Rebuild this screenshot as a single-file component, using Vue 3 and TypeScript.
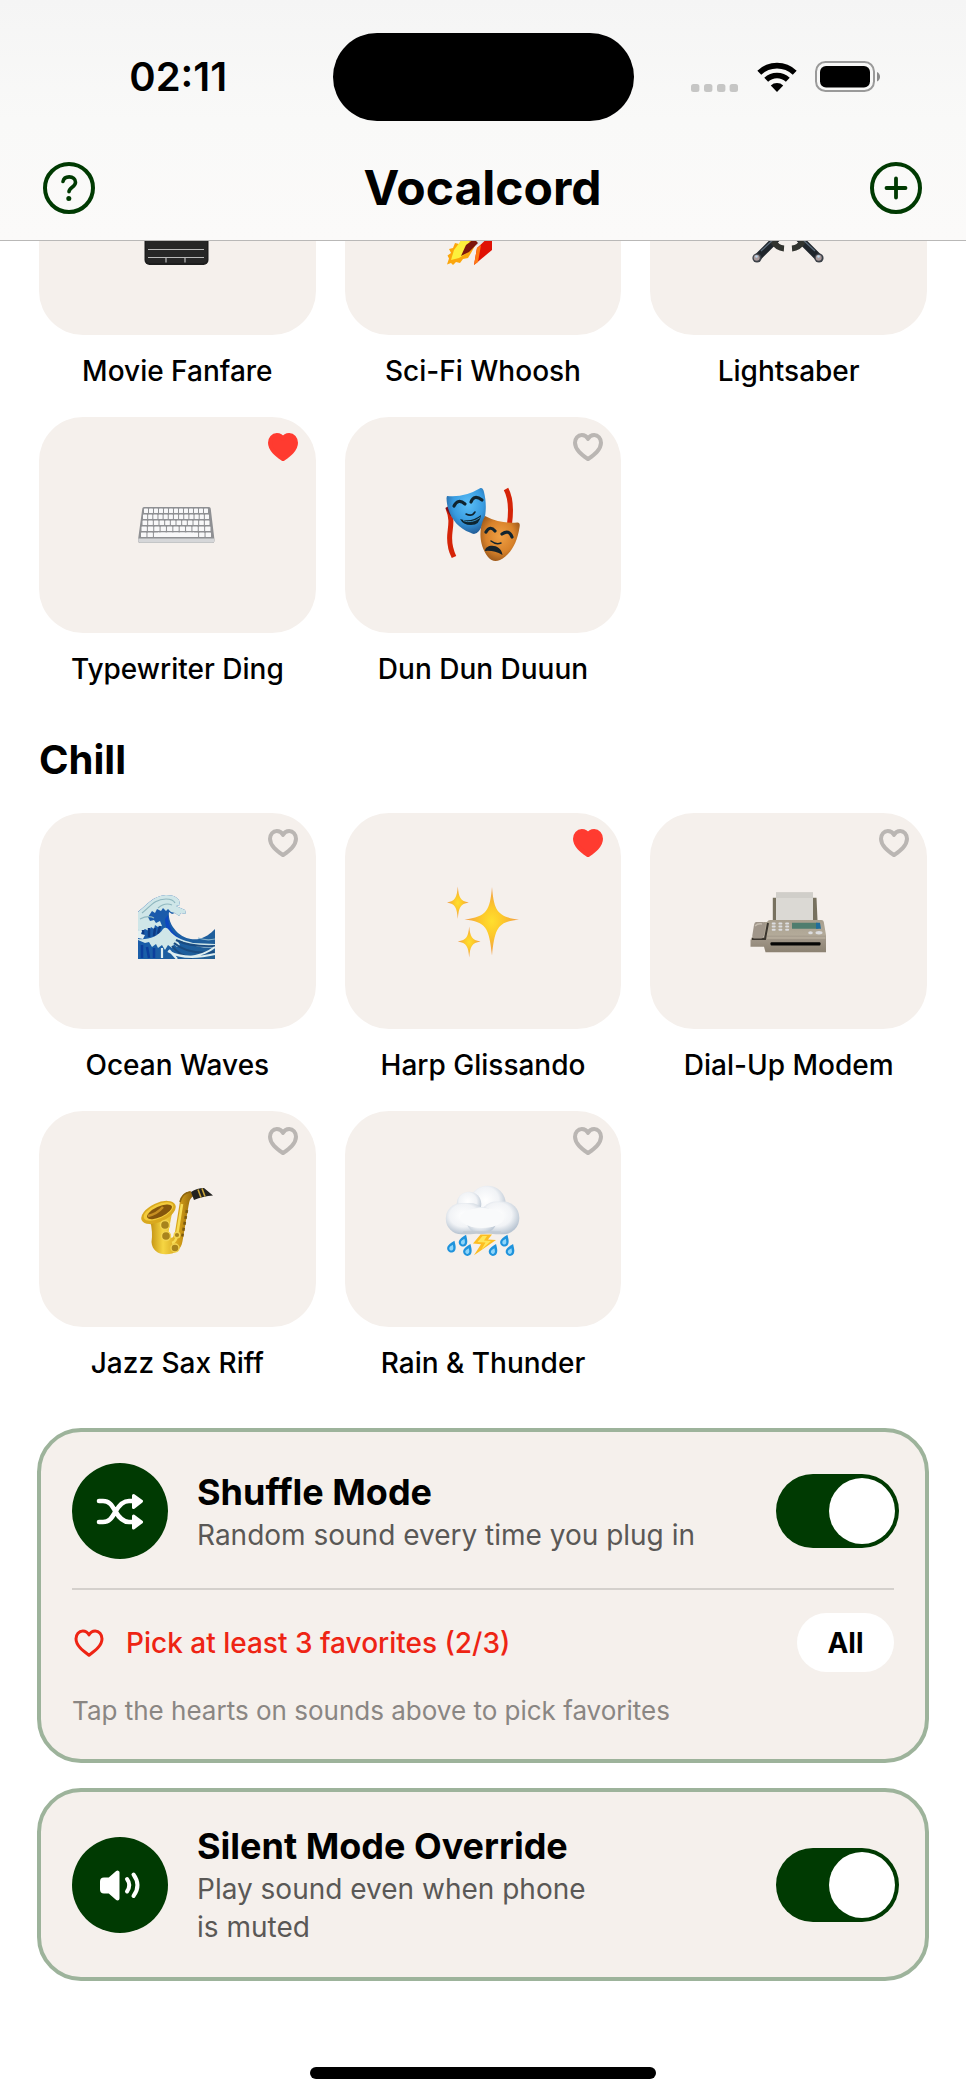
<script setup lang="ts">
import { ref } from 'vue'

interface Sound {
  id: string
  name: string
  favorite: boolean
}

interface Section {
  title: string
  sounds: Sound[]
}

const sections = ref<Section[]>([
  {
    title: '',
    sounds: [
      { id: 'clapper', name: 'Movie Fanfare', favorite: false },
      { id: 'rocket', name: 'Sci-Fi Whoosh', favorite: false },
      { id: 'swords', name: 'Lightsaber', favorite: false },
      { id: 'keyboard', name: 'Typewriter Ding', favorite: true },
      { id: 'masks', name: 'Dun Dun Duuun', favorite: false },
    ],
  },
  {
    title: 'Chill',
    sounds: [
      { id: 'wave', name: 'Ocean Waves', favorite: false },
      { id: 'sparkles', name: 'Harp Glissando', favorite: true },
      { id: 'fax', name: 'Dial-Up Modem', favorite: false },
      { id: 'sax', name: 'Jazz Sax Riff', favorite: false },
      { id: 'storm', name: 'Rain & Thunder', favorite: false },
    ],
  },
])

const shuffle = ref(true)
const silentOverride = ref(true)

const heartPath =
  'M15 26.2C9 21.8 2 16.8 2 9.8 2 5.4 5 2 8.8 2c2.7 0 4.9 1.4 6.2 3.9C16.3 3.4 18.5 2 21.2 2 25 2 28 5.4 28 9.8c0 7-7 12-13 16.4z'

// One entry per row of keys: y, left edge, right edge, number of keys.
const keyRows = [
  { y: 22.5, x1: 6, x2: 71, n: 13 },
  { y: 28.5, x1: 5, x2: 72, n: 13 },
  { y: 34.5, x1: 4.5, x2: 72.5, n: 12 },
  { y: 40.5, x1: 3.5, x2: 73.5, n: 11 },
  { y: 46.5, x1: 3, x2: 74, n: 11 },
]
const keys = keyRows.flatMap((r) => {
  const w = (r.x2 - r.x1) / r.n
  return Array.from({ length: r.n }, (_, i) => ({ x: r.x1 + i * w, y: r.y, w: w - 1 }))
})

const drops = [
  [8, 66.7],
  [19.6, 60.7],
  [24, 70],
  [49.6, 70],
  [61, 60.7],
  [66.6, 70],
]
</script>

<template>
  <div class="screen">
    <header class="top">
      <div class="status">
        <time class="clock">02:11</time>
        <div class="island"></div>
        <div class="indicators">
          <svg width="48" height="30" viewBox="0 0 48 30" fill="#c6c6c5" aria-hidden="true">
            <rect x="0" y="22" width="8.4" height="8" rx="2.5" />
            <rect x="13" y="22" width="8.4" height="8" rx="2.5" />
            <rect x="26" y="22" width="8.4" height="8" rx="2.5" />
            <rect x="38.6" y="22" width="8.4" height="8" rx="2.5" />
          </svg>
          <svg width="40" height="30" viewBox="0 0 40 30" aria-hidden="true">
            <path d="M2.3 10.8A25.5 25.5 0 0 1 37.7 10.8" fill="none" stroke="#000" stroke-width="5.6" />
            <path d="M9.2 17.8A15.8 15.8 0 0 1 30.8 17.8" fill="none" stroke="#000" stroke-width="5.6" />
            <path d="M20 30L13.8 23.6a9 9 0 0 1 12.4 0z" />
          </svg>
          <svg width="66" height="32" viewBox="0 0 66 32" aria-hidden="true">
            <rect x="1" y="1" width="58" height="29" rx="9.5" fill="none" stroke="#9a9a9a" stroke-width="2" />
            <rect x="5" y="5" width="50" height="21.5" rx="6" />
            <path d="M62 11c4 1.500 4 8 0 9.500z" fill="#8a8a8a" />
          </svg>
        </div>
      </div>
      <div class="nav">
        <button type="button" class="round" aria-label="Help">
          <svg width="52" height="52" viewBox="0 0 52 52" fill="none" stroke="#003a02" stroke-linecap="round">
            <circle cx="26" cy="26" r="24" stroke-width="4" />
            <path d="M20 19.5c.6-3.200 3-4.600 6.200-4.600 3.700 0 6.300 2 6.300 5.300 0 5-6.500 4.900-6.500 9.500" stroke-width="3.600" />
            <circle cx="25.800" cy="36.600" r="2.500" fill="#003a02" stroke="none" />
          </svg>
        </button>
        <h1>Vocalcord</h1>
        <button type="button" class="round" aria-label="Add sound">
          <svg width="52" height="52" viewBox="0 0 52 52" fill="none" stroke="#003a02" stroke-linecap="round">
            <circle cx="26" cy="26" r="24" stroke-width="4" />
            <path d="M26 16.500v19M16.500 26h19" stroke-width="3.800" />
          </svg>
        </button>
      </div>
    </header>

    <main>
      <section v-for="section in sections" :key="section.title" class="group">
        <h2 v-if="section.title">{{ section.title }}</h2>
        <div class="grid">
          <div v-for="sound in section.sounds" :key="sound.id" class="sound">
            <div class="tile">
              <button type="button" class="card" :aria-labelledby="`name-${sound.id}`">
                <svg width="78" height="78" viewBox="0 0 78 78" aria-hidden="true">
                  <template v-if="sound.id === 'clapper'">
                    <path d="M6 8L70 0v12L6 20z" fill="#222" />
                    <rect x="6.500" y="20" width="64" height="57" rx="5" fill="#1d1d1d" />
                    <rect x="8" y="20" width="61" height="55" rx="4" fill="#262626" />
                    <path d="M10 61.500h56M10 69.500h56M28 69.500v5M47 69.500v5" stroke="#b9b9b9" stroke-width="1.200" />
                  </template>

                  <template v-else-if="sound.id === 'rocket'">
                    <path d="M20 46C32 20 52 6 74 3 72 25 58 46 32 58z" fill="#dfe3e8" />
                    <path d="M33 60L48 46v16L30 77z" fill="#e01004" />
                    <path d="M33 60l4-3-3 17-4 3z" fill="#ff7a12" />
                    <path
                      d="M3 76.500l2-6-1.500-3L7 65l-2-4 4-1 2-5 4 1 6-10 12 8-6 11-3 5-5 1-3 4-4-1-3 3-2-2z"
                      fill="#fba60c"
                    />
                    <path d="M7 72l3-10 9-12 9 5-5 10-8 5z" fill="#fdf03c" />
                    <path d="M17 68l5-11 8-6 4 4-9 9z" fill="#7d150c" />
                  </template>

                  <template v-else-if="sound.id === 'swords'">
                    <path d="M72 2L30 50M4 2l43 48" stroke="#c4cbd1" stroke-width="5" />
                    <g stroke="#20262c" fill="none">
                      <path d="M8 69L29 48M68 69L47 48" stroke-width="7.500" />
                      <path d="M22 52q5 8 12 8.500M54 52q-5 8-12 8.500" stroke="#32342f" stroke-width="6" />
                    </g>
                    <path d="M11 63L26 49M65 63L50 49" stroke="#5c6b7a" stroke-width="1.300" />
                    <circle cx="7" cy="70" r="4.600" fill="#3c4148" />
                    <circle cx="69" cy="70" r="4.600" fill="#3c4148" />
                    <circle cx="6.700" cy="69.700" r="3" fill="#a99a9b" />
                    <circle cx="68.700" cy="69.700" r="3" fill="#a99a9b" />
                    <circle cx="6.500" cy="68.500" r="1.300" fill="#b9d4ea" />
                    <circle cx="68.500" cy="68.500" r="1.300" fill="#b9d4ea" />
                  </template>

                  <template v-else-if="sound.id === 'keyboard'">
                    <path d="M6 21h65q1.500 0 1.700 1.500L76.500 54q0 3-2 3H2q-2 0-2-3L4.300 22.500Q4.500 21 6 21z" fill="#8f9093" />
                    <path d="M.3 52.500h76l.2 2.500q-.3 1.700-2 1.700H2Q.3 56.700.2 55z" fill="#d6d7d9" />
                    <rect
                      v-for="(k, i) in keys"
                      :key="i"
                      :x="k.x"
                      :y="k.y"
                      :width="k.w"
                      height="4.500"
                      rx=".6"
                      fill="#f8f8f9"
                    />
                    <rect x="20" y="46.500" width="36" height="4.500" fill="#f8f8f9" />
                  </template>

                  <template v-else-if="sound.id === 'masks'">
                    <defs>
                      <radialGradient id="maskBlue" cx=".55" cy=".35" r=".65">
                        <stop offset="0" stop-color="#5cc0f8" />
                        <stop offset=".6" stop-color="#389be0" />
                        <stop offset="1" stop-color="#235f9a" />
                      </radialGradient>
                      <radialGradient id="maskGold" cx=".5" cy=".45" r=".6">
                        <stop offset="0" stop-color="#f0a044" />
                        <stop offset=".6" stop-color="#d8822a" />
                        <stop offset="1" stop-color="#96551a" />
                      </radialGradient>
                    </defs>
                    <path d="M4 22c4 10 3 16 2 24s0 17 4 25" fill="none" stroke="#d52408" stroke-width="5" />
                    <path d="M3 21l5 8" stroke="#7c0c1a" stroke-width="4" />
                    <path d="M62 3c5 9 5.500 20 3.500 35" fill="none" stroke="#d52408" stroke-width="5" />
                    <path d="M3 10q17 2 33.500-8Q39 1.500 40 6c3.500 14 2 30-5 39q-4 5-9 1.500C13 42 3 29 2.500 12z" fill="url(#maskBlue)" />
                    <path d="M41 30q15 8 32.500 6.500 3 0 2 5C73 58 66 69 56 74q-7 3-12-3c-9-12-10-28-3-41z" fill="url(#maskGold)" />
                    <g fill="none" stroke="#10242f" stroke-linecap="round">
                      <path d="M10 20q4-8 11-2M27 16q3-8 11-2" stroke-width="3.200" />
                      <path d="M22 28q6 3 9-2" stroke-width="1.500" />
                      <path d="M42 46q4-7 9-1M58 48q7-5 10 3" stroke-width="3.200" />
                      <path d="M47 55q5 4 10 2" stroke-width="1.500" />
                    </g>
                    <path d="M16 33q11 4 21-4-1 10-10 10-8 0-11-6z" fill="#0d2530" />
                    <path d="M19 34.500q9 3.500 17-3" fill="none" stroke="#3a8ab8" stroke-width="1" />
                    <path d="M41 65c0-7 16-8 17.500 4q-9-5-17.500-4z" fill="#15222a" />
                  </template>

                  <template v-else-if="sound.id === 'wave'">
                    <defs>
                      <linearGradient id="sea" x1="0" y1="0" x2="1" y2="1">
                        <stop offset="0" stop-color="#1a55b0" />
                        <stop offset=".5" stop-color="#1a5ea8" />
                        <stop offset="1" stop-color="#235f92" />
                      </linearGradient>
                    </defs>
                    <path
                      d="M-.5 30C8 24 14 14 28 13c9 0 11 3 13 5l1 5-4 1 9 4 1 4-5-1-2 3-4-3-3 1-3-2c-1 8 3 15 9 21 7 6 15 7 21 6 7-2 11-5 16-10v30H-.5z"
                      fill="url(#sea)"
                    />
                    <path
                      d="M0 30C8 24 14 14 28 13c9 0 11 3 13 5l1 5-4 1 9 4 1 4-5-1-2 3-4-3-4-1-3-3-2 2-3-3-2 3-4-2-2 4-3-2-4 6 2 4 4-1 2 3 4-2 2 5-4 1-3-2-1 4-3-2-2 4-4-2-4 3-4-3z"
                      fill="#cfe6e8"
                    />
                    <path d="M4 31C12 25 16 17 28 17c5 0 8 2 9 4M20 26q7-6 14-3M2 37q8-4 14-1" fill="none" stroke="#8fb7bf" stroke-width="1.200" />
                    <path d="M30 33c0 11 4 19 15 25l-9-2c-6-4-9-12-9-19z" fill="#0d48c0" />
                    <path d="M5 48v7M11 46v9M17 46l-1 8M22 44l-2 8" stroke="#0d3c86" stroke-width="2.500" />
                    <path d="M0 48l4 1-1 3 4 1-2 4-5-1z" fill="#e2f0f1" />
                    <path
                      d="M0 57c10 1 20-2 25-10q3-3 6 1c5 7 13 10 24 13l22 1v3c-14 2-24-2-34-6l-4-1 3 5-3 2-3-3-2 4-4-3-3 5-3-5-4 3-2-4-4 3-3-5-4 1-7-3z"
                      fill="#cfe6e8"
                    />
                    <path d="M38 58q14 7 39 6M36 61q14 12 40 9M34 64q8 10 20 12" fill="none" stroke="#1a4b80" stroke-width="2" />
                    <path d="M30 69q16 10 47 3M77 65q-10 8-26 10M24 66v10M31 68l8 9" fill="none" stroke="#dfeef0" stroke-width="2.200" />
                    <path d="M60 56q9 3 17 1" fill="none" stroke="#86b3cc" stroke-width="1.200" />
                    <path d="M4 63v13M9 65l2 11M16 66v10" stroke="#0c3f9c" stroke-width="2.500" />
                  </template>

                  <template v-else-if="sound.id === 'sparkles'">
                    <defs>
                      <radialGradient id="spark">
                        <stop offset="0" stop-color="#ffdf2e" />
                        <stop offset=".4" stop-color="#fdc92a" />
                        <stop offset="1" stop-color="#f09a4a" />
                      </radialGradient>
                    </defs>
                    <g fill="url(#spark)">
                      <path d="M48 5c2 23 5 30 27 32.500C54 40 51 45 48 73.500 45 45 42 40 20.500 37.500 43 35 46 28 48 5z" />
                      <path d="M13.800 4.500c1 11 2.500 14.500 11 16-8.500 1.500-10 5-11 16.500-1-11.500-2.500-15-10.800-16.500 8.300-1.500 9.800-5 10.800-16z" />
                      <path d="M25.200 44.500c1 10 2.500 13.500 11.300 15-8.800 1.500-10.300 5-11.300 16-1-11-2.500-14.500-11.400-16 8.900-1.500 10.400-5 11.400-15z" />
                    </g>
                  </template>

                  <template v-else-if="sound.id === 'fax'">
                    <defs>
                      <linearGradient id="faxBody" x1="0" y1="0" x2="0" y2="1">
                        <stop offset="0" stop-color="#a89f8e" />
                        <stop offset=".45" stop-color="#b3aa99" />
                        <stop offset=".55" stop-color="#a2988a" />
                        <stop offset="1" stop-color="#8c8272" />
                      </linearGradient>
                    </defs>
                    <path d="M22.800 15.700h3.500V38h-3.500zM63 15.700h3.500l1 22.300H63z" fill="#77715f" />
                    <path d="M26 10.300h37V39H26z" fill="#dbd9d4" />
                    <path d="M26 10.300h37V16H26z" fill="#d0cec9" />
                    <path d="M2 55h12V40h3q1-2 3-2h51.500q2 0 2.300 2L76 53v17.300H15.500L14 64.700H.5V58z" fill="url(#faxBody)" />
                    <path d="M2 57h13l3-16" fill="none" stroke="#3a352e" stroke-width="2" />
                    <path d="M6 40h7q3 0 2.500 3L14 53.500q-.5 3-3 3H4q-2 0-1.700-3L4 43q.5-3 2-3z" fill="#a0968a" />
                    <path d="M5 44q3-3 7-2" fill="none" stroke="#c6bdb0" stroke-width="1.500" />
                    <path d="M42 40.700h25.500l1 6H42z" fill="#4f7d6e" />
                    <path d="M66 40.700h4l1 6h-5z" fill="#1e6d9c" />
                    <g fill="#dcdde0">
                      <template v-for="r in 3" :key="r">
                        <rect v-for="c in 3" :key="c" :x="15 + c * 6.7" :y="37.2 + r * 3.2" width="4" height="2" rx="1" />
                      </template>
                      <ellipse cx="60.500" cy="50.700" rx="2.300" ry="1.500" />
                      <ellipse cx="69" cy="50.700" rx="3.500" ry="1.700" />
                    </g>
                    <path d="M17 56h58.500" stroke="#c4baa8" stroke-width="1" />
                    <rect x="20.500" y="60.200" width="50" height="3.400" rx="1" fill="#050505" />
                  </template>

                  <template v-else-if="sound.id === 'sax'">
                    <defs>
                      <linearGradient id="brass" x1="0" y1="0" x2="1" y2="0">
                        <stop offset="0" stop-color="#c29011" />
                        <stop offset=".3" stop-color="#f6d643" />
                        <stop offset=".7" stop-color="#cf9a17" />
                        <stop offset="1" stop-color="#8d6209" />
                      </linearGradient>
                    </defs>
                    <path
                      d="M12 40q3 12 1.500 22C14 70 20 74.500 28 74.300c9 0 15-4 16.500-13L50.500 26q1-8 5-10l-3-5q-9 2-10.500 10L37 52q-2 8-5 5-2-3-1-8l3-16z"
                      fill="url(#brass)"
                    />
                    <path d="M44 24l-5 31q-1 7-5 8" fill="none" stroke="#f7dc55" stroke-width="2.500" />
                    <path d="M49 30l-5 28" stroke="#7c5a10" stroke-width="2.500" stroke-dasharray="3 3" />
                    <ellipse cx="20.500" cy="32.500" rx="18.500" ry="9.500" transform="rotate(-25 20.500 32.500)" fill="#d9a91f" />
                    <ellipse cx="20.500" cy="31.500" rx="16" ry="7" transform="rotate(-25 20.500 31.500)" fill="#f3cb3c" />
                    <ellipse cx="21.500" cy="31.800" rx="13.500" ry="5.200" transform="rotate(-25 21.500 31.800)" fill="#85560c" />
                    <path d="M10 36q9-2 15-9" fill="none" stroke="#c68f22" stroke-width="2.500" />
                    <g fill="#a8841c" stroke="#f3d450" stroke-width="1.400">
                      <circle cx="27" cy="45" r="4.500" />
                      <circle cx="28" cy="56" r="4.500" />
                      <circle cx="37" cy="68" r="4" />
                      <circle cx="39" cy="55" r="2.800" />
                    </g>
                    <path d="M42 22q2-9 10-10" fill="none" stroke="#8c640e" stroke-width="1.500" />
                    <path d="M53 12q6-4 13-4l9 7.500q-10 .5-19 4.500z" fill="#22221f" />
                    <path d="M60 9.500l3 8M64 8.500l3 8" stroke="#c9a53a" stroke-width="1.600" />
                  </template>

                  <template v-else>
                    <defs>
                      <radialGradient id="puff" cx=".45" cy=".4" r=".6">
                        <stop offset="0" stop-color="#ffffff" />
                        <stop offset=".6" stop-color="#f1f3f6" />
                        <stop offset="1" stop-color="#b9c5d2" />
                      </radialGradient>
                    </defs>
                    <circle cx="43.500" cy="24" r="18.300" fill="url(#puff)" />
                    <circle cx="25" cy="24" r="12.300" fill="url(#puff)" />
                    <rect x="1.800" y="23" width="40" height="31.300" rx="15.600" fill="url(#puff)" />
                    <rect x="36" y="21.500" width="39.300" height="32.800" rx="16" fill="url(#puff)" />
                    <ellipse cx="37.500" cy="40.500" rx="15" ry="13.500" fill="url(#puff)" />
                    <ellipse cx="38" cy="38" rx="22" ry="10" fill="#f9fafb" />
                    <path d="M20 52.500h36" stroke="#c3cbd3" stroke-width="2.500" stroke-linecap="round" />
                    <path d="M36.500 54.500L29 63.500l8 .8-7 11L52 60l-8-.5 4-5z" fill="#fdbd22" />
                    <path d="M38.500 56l-5 6 8 .5-4 7L47 61l-7-.5 3-4.500z" fill="#ffe65a" />
                    <g v-for="(d, i) in drops" :key="i">
                      <path
                        :transform="`translate(${d[0]} ${d[1]}) rotate(22)`"
                        d="M0-6.500C3-2.500 4.200-.5 4.200 1.800a4.200 4.200 0 0 1-8.400 0C-4.200-.5-3-2.500 0-6.500z"
                        fill="#1f93dc"
                      />
                      <path
                        :transform="`translate(${d[0]} ${d[1]}) rotate(22)`"
                        d="M0-2c1.500 2 2 3 2 4a2 2 0 0 1-4 0C-2 1-1.500 0 0-2z"
                        fill="#8fd6fa"
                      />
                    </g>
                  </template>
                </svg>
              </button>
              <button
                type="button"
                class="heart"
                :class="{ on: sound.favorite }"
                :aria-pressed="sound.favorite"
                :aria-label="`Favorite ${sound.name}`"
                @click="sound.favorite = !sound.favorite"
              >
                <svg width="30" height="28" viewBox="0 0 30 28"><path :d="heartPath" /></svg>
              </button>
            </div>
            <p :id="`name-${sound.id}`" class="name">{{ sound.name }}</p>
          </div>
        </div>
      </section>

      <div class="panels">
        <section class="panel">
          <div class="row">
            <span class="badge">
              <svg width="96" height="96" viewBox="0 0 96 96" fill="none" stroke="#fff" aria-hidden="true">
                <path
                  d="M27 38h4c6 0 8.500 3.500 12.500 10.500S51 59 57 59h4M27 59h4c6 0 8.500-3.500 12.500-10.500S51 38 57 38h4"
                  stroke-width="4.600"
                  stroke-linecap="round"
                />
                <path d="M61.500 32.500l8 5.700-8 6.300zM61.500 53l8 6-8 6z" fill="#fff" stroke-width="3" stroke-linejoin="round" />
              </svg>
            </span>
            <label class="copy" for="shuffle">
              <strong>Shuffle Mode</strong>
              <span>Random sound every time you plug in</span>
            </label>
            <input id="shuffle" v-model="shuffle" class="switch" type="checkbox" role="switch" />
          </div>
          <hr />
          <div class="pick">
            <svg width="30" height="28" viewBox="0 0 30 28" aria-hidden="true"><path :d="heartPath" /></svg>
            <span>Pick at least 3 favorites (2/3)</span>
            <button type="button" class="all">All</button>
          </div>
          <p class="hint">Tap the hearts on sounds above to pick favorites</p>
        </section>

        <section class="panel">
          <div class="row">
            <span class="badge">
              <svg width="96" height="96" viewBox="0 0 96 96" fill="none" stroke="#fff" stroke-linecap="round" aria-hidden="true">
                <path
                  d="M32 42.500h5.500l8-7v26l-8-7H32q-2 0-2-2v-8q0-2 2-2z"
                  fill="#fff"
                  stroke-width="4"
                  stroke-linejoin="round"
                />
                <path d="M55 42q4.500 6 0 12.500M61.500 37.500q8 11 0 21.500" stroke-width="4" />
              </svg>
            </span>
            <label class="copy" for="silent">
              <strong>Silent Mode Override</strong>
              <span>Play sound even when phone<br />is muted</span>
            </label>
            <input id="silent" v-model="silentOverride" class="switch" type="checkbox" role="switch" />
          </div>
        </section>
      </div>
    </main>

    <div class="home"></div>
  </div>
</template>

<style>
body {
  background: #fff;
}
</style>

<style scoped>
.screen {
  font-family: Inter, "Liberation Sans", sans-serif;
  color: #000;
  padding-bottom: 18px;
}

h1,
h2,
p {
  margin: 0;
}

button {
  border: 0;
  padding: 0;
  background: none;
  font: inherit;
  color: inherit;
  cursor: pointer;
}

svg {
  display: block;
}

.top {
  position: fixed;
  z-index: 2;
  top: 0;
  left: 0;
  right: 0;
  box-sizing: border-box;
  padding-top: 33px;
  background: linear-gradient(#f5f5f5, #f9f9f8 50%, #fbfaf9);
  border-bottom: 1px solid #b9b8b7;
}

.status {
  display: grid;
  grid-template-columns: 1fr 301px 1fr;
  align-items: center;
}

.clock {
  justify-self: center;
  padding-left: 24px;
  font-size: 40px;
  line-height: 48px;
  font-weight: 600;
}

.island {
  height: 88px;
  border-radius: 44px;
  background: #000;
}

.indicators {
  display: flex;
  align-items: center;
  justify-content: flex-end;
  gap: 18px;
  padding-right: 85px;
}

.nav {
  display: flex;
  align-items: center;
  justify-content: space-between;
  padding: 37px 44px 22px 43px;
}

.nav h1 {
  font-size: 48px;
  line-height: 60px;
  font-weight: 700;
}

.round {
  width: 52px;
  height: 52px;
}

main {
  padding-top: 119px;
}

.group {
  padding: 0 39px;
}

h2 {
  margin: 50px 0 29px;
  font-size: 40px;
  line-height: 48px;
  font-weight: 700;
}

.grid {
  display: grid;
  grid-template-columns: repeat(3, minmax(0, 1fr));
  gap: 29px;
}

.tile {
  position: relative;
}

.card {
  display: flex;
  align-items: center;
  justify-content: center;
  width: 100%;
  height: 216px;
  border-radius: 44px;
  background: #f5f0ec;
}

.heart {
  position: absolute;
  top: 16px;
  right: 18px;
}

.heart path {
  fill: none;
  stroke: #bab6b3;
  stroke-width: 4;
  stroke-linejoin: round;
}

.heart.on path {
  fill: #ff3b30;
  stroke: #ff3b30;
}

.name {
  margin-top: 19px;
  font-size: 28px;
  line-height: 34px;
  font-weight: 500;
  text-align: center;
  white-space: nowrap;
}

.panels {
  display: flex;
  flex-direction: column;
  gap: 25px;
  margin-top: 48px;
  padding: 0 37px;
}

.panel {
  padding: 31px;
  border: 4px solid #9db39b;
  border-radius: 44px;
  background: #f5f0ec;
}

.row {
  display: flex;
  align-items: center;
  gap: 29px;
}

.badge {
  flex: none;
  border-radius: 50%;
  background: #003a02;
}

.copy {
  flex: 1;
  min-width: 0;
}

.copy strong,
.copy span {
  display: block;
}

.copy strong {
  font-size: 36px;
  line-height: 47px;
  font-weight: 700;
}

.copy span {
  font-size: 28px;
  line-height: 38px;
  color: #5a5856;
}

.switch {
  appearance: none;
  flex: none;
  display: flex;
  box-sizing: border-box;
  width: 123px;
  height: 74px;
  margin: 0 -5px 0 0;
  padding: 4px;
  border-radius: 37px;
  background: #c9c5c1;
  cursor: pointer;
}

.switch::before {
  content: "";
  width: 66px;
  height: 66px;
  border-radius: 50%;
  background: #fff;
}

.switch:checked {
  justify-content: flex-end;
  background: #003a02;
}

hr {
  height: 2px;
  margin: 29px 0 23px;
  border: 0;
  background: #d4d0cc;
}

.pick {
  display: flex;
  align-items: center;
  gap: 22px;
  padding-left: 2px;
  font-size: 28px;
  color: #ee2414;
}

.pick path {
  fill: none;
  stroke: #ee2414;
  stroke-width: 3;
  stroke-linejoin: round;
}

.pick span {
  font-weight: 500;
}

.all {
  width: 97px;
  height: 59px;
  margin-left: auto;
  border-radius: 30px;
  background: #fff;
  color: #000;
  font-weight: 700;
}

.hint {
  margin-top: 22px;
  font-size: 26px;
  line-height: 34px;
  color: #8a8683;
}

.home {
  width: 346px;
  height: 12px;
  margin: 86px auto 0;
  border-radius: 6px;
  background: #000;
}
</style>
